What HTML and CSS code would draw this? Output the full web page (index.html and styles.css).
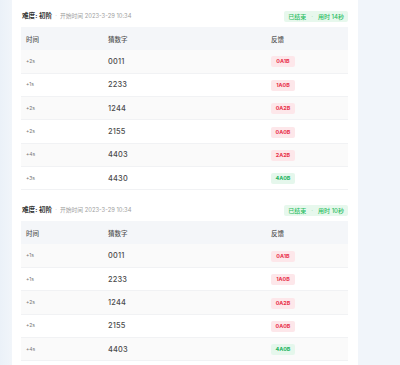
FILE: index.html
```html
<!DOCTYPE html>
<html lang="zh">
<head>
<meta charset="utf-8">
<link rel="stylesheet" href="styles.css">
</head>
<body>
<div class="page">
  <div class="panel">
    <section class="game">
      <div class="game-head">
        <div class="meta"><span class="level">难度: 初阶</span><span class="dot">·</span><span class="start">开始时间 2023-3-29 10:34</span></div>
        <span class="status">已结束<span class="sep">·</span>用时 14秒</span>
      </div>
      <table class="log">
        <thead><tr><th class="c-time">时间</th><th class="c-num">猜数字</th><th class="c-fb">反馈</th></tr></thead>
        <tbody>
          <tr><td class="t">+2s</td><td class="n">0011</td><td><span class="fb bad">0A1B</span></td></tr>
          <tr><td class="t">+1s</td><td class="n">2233</td><td><span class="fb bad">1A0B</span></td></tr>
          <tr><td class="t">+2s</td><td class="n">1244</td><td><span class="fb bad">0A2B</span></td></tr>
          <tr><td class="t">+2s</td><td class="n">2155</td><td><span class="fb bad">0A0B</span></td></tr>
          <tr><td class="t">+4s</td><td class="n">4403</td><td><span class="fb bad">2A2B</span></td></tr>
          <tr><td class="t">+3s</td><td class="n">4430</td><td><span class="fb good">4A0B</span></td></tr>
        </tbody>
      </table>
    </section>
    <section class="game">
      <div class="game-head">
        <div class="meta"><span class="level">难度: 初阶</span><span class="dot">·</span><span class="start">开始时间 2023-3-29 10:34</span></div>
        <span class="status">已结束<span class="sep">·</span>用时 10秒</span>
      </div>
      <table class="log">
        <thead><tr><th class="c-time">时间</th><th class="c-num">猜数字</th><th class="c-fb">反馈</th></tr></thead>
        <tbody>
          <tr><td class="t">+1s</td><td class="n">0011</td><td><span class="fb bad">0A1B</span></td></tr>
          <tr><td class="t">+1s</td><td class="n">2233</td><td><span class="fb bad">1A0B</span></td></tr>
          <tr><td class="t">+2s</td><td class="n">1244</td><td><span class="fb bad">0A2B</span></td></tr>
          <tr><td class="t">+2s</td><td class="n">2155</td><td><span class="fb bad">0A0B</span></td></tr>
          <tr><td class="t">+4s</td><td class="n">4403</td><td><span class="fb good">4A0B</span></td></tr>
        </tbody>
      </table>
    </section>
  </div>
</div>
</body>
</html>
```
FILE: styles.css
```css
* { box-sizing: border-box; }
html, body { margin: 0; padding: 0; }
body {
  background: #f1f5fa;
  font-family: "Inter", "Noto Sans CJK SC", sans-serif;
  height: 365px;
  overflow: hidden;
}
.page {
  background: linear-gradient(90deg, #ebf1f8 0, #f1f5fa 12px);
  min-height: 365px;
}
.panel {
  margin-left: 12px;
  width: 346px;
  background: #fff;
  padding: 0 10px 0 9px;
  min-height: 365px;
}
.game + .game { margin-top: 4px; }
.game-head {
  display: flex;
  align-items: center;
  justify-content: space-between;
  height: 27px;
  padding: 9px 0 4px 1px;
}
.meta { display: flex; align-items: center; line-height: 14px; }
.level { font-size: 6.6px; font-weight: 700; color: #333; }
.dot { font-size: 6px; color: #bbb; margin: 0 3px; }
.start { font-size: 5.8px; color: #a0a0a0; }
.status {
  display: inline-flex;
  align-items: center;
  height: 11px;
  padding: 0 4px;
  border-radius: 2px;
  background: #e7f8ed;
  color: #2bbd62;
  font-size: 6px;
  font-weight: 500;
}
.sep { margin: 0 5px; color: #9ad9b0; }
.log {
  width: 327px;
  border-collapse: collapse;
  table-layout: fixed;
}
.log th {
  height: 23px;
  background: #f4f6f9;
  font-size: 6.5px;
  font-weight: 500;
  color: #555;
  text-align: left;
  padding: 0 5px;
}
.c-time { width: 82px; }
.c-num { width: 163px; }
.log td {
  height: 23.3px;
  padding: 0 5px;
  border-bottom: 1px solid #f1f2f4;
  vertical-align: middle;
  line-height: 11px;
}
.log tbody tr:nth-child(odd) td { background: #fafafa; }
.t { font-size: 5px; color: #777; }
.n { font-size: 7.4px; color: #4a4a4a; font-weight: 500; letter-spacing: 0.2px; }
.fb {
  display: inline-flex;
  vertical-align: middle;
  align-items: center;
  justify-content: center;
  width: 24px;
  height: 11px;
  border-radius: 2px;
  font-size: 5.4px;
  font-weight: 700;
}
.bad { background: #fde7ea; color: #e8324a; }
.good { background: #e5f7ec; color: #23b45e; }
```
